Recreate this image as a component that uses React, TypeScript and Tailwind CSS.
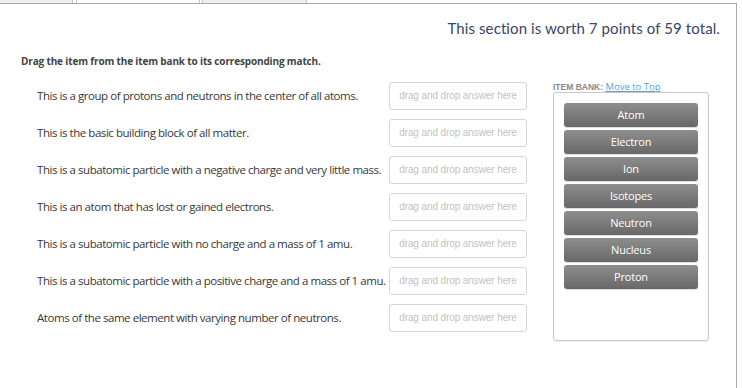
import React from "react";

const rows = [
  "This is a group of protons and neutrons in the center of all atoms.",
  "This is the basic building block of all matter.",
  "This is a subatomic particle with a negative charge and very little mass.",
  "This is an atom that has lost or gained electrons.",
  "This is a subatomic particle with no charge and a mass of 1 amu.",
  "This is a subatomic particle with a positive charge and a mass of 1 amu.",
  "Atoms of the same element with varying number of neutrons.",
];

const bank = ["Atom", "Electron", "Ion", "Isotopes", "Neutron", "Nucleus", "Proton"];

export default function App() {
  return (
    <div className="w-[742px] h-[388px] bg-white overflow-hidden">
      {/* tabs */}
      <div className="flex h-[3px] w-[737px]">
        <div className="w-[73px] bg-[#efefef] border-r border-[#c4c4c4]" />
        <div className="w-[3px]" />
        <div className="w-[124px] bg-white border-l border-r border-[#c4c4c4]" />
        <div className="w-[2px]" />
        <div className="w-[105px] bg-[#efefef] border-l border-r border-[#c4c4c4]" />
      </div>
      <div className="w-[737px] h-[385px] border-t border-r border-[#a9a9a9] font-['Lato',sans-serif]">
        <div className="flex justify-end pr-[16px] pt-[13px]">
          <span className="text-[15px] text-[#3b4466] tracking-[0.1px] font-['Lato',sans-serif]">
            This section is worth 7 points of 59 total.
          </span>
        </div>
        <div className="pl-[21px] pt-[14px] text-[10px] font-bold text-[#444] font-['Open_Sans',sans-serif] tracking-[-0.15px]">
          Drag the item from the item bank to its corresponding match.
        </div>
        <div className="flex pt-[4px]">
          <div className="w-[532px] flex flex-col gap-[9px] pt-[9px]">
            {rows.map((r) => (
              <div key={r} className="flex items-center h-[28px]">
                <div className="w-[389px] pl-[37px] text-[11.5px] text-[#383838] font-['Open_Sans',sans-serif] tracking-[-0.45px] whitespace-nowrap">
                  {r}
                </div>
                <div className="w-[138px] h-[28px] border border-[#d6d6d6] rounded-[3px] flex items-center justify-center text-[10px] text-[#c2c2c2] font-['Liberation_Sans',sans-serif] tracking-[-0.1px]">
                  drag and drop answer here
                </div>
              </div>
            ))}
          </div>
          <div className="ml-[21px] flex flex-col">
            <div className="text-[8.5px] leading-[12px] font-['Liberation_Sans',sans-serif] pt-[8px]">
              <span className="font-bold text-[#8a8a8a]">ITEM BANK: </span>
              <span className="text-[#5a9fd4] underline text-[9.5px] font-['Open_Sans',sans-serif]">Move to Top</span>
            </div>
            <div className="mt-[-1px] w-[156px] h-[249px] border border-[#c8c8c8] rounded-[3px] shadow-[0_1px_1px_rgba(0,0,0,0.06)] flex flex-col items-center pt-[10px] gap-[3px]">
              {bank.map((b) => (
                <div
                  key={b}
                  className="w-[134px] h-[24px] shrink-0 rounded-[3px] bg-gradient-to-b from-[#8e8e8e] to-[#686868] text-white text-[11px] leading-[14px] pt-[1px] flex items-center justify-center font-['Open_Sans',sans-serif] tracking-[-0.2px] shadow-[0_1px_1px_rgba(0,0,0,0.15)]"
                >
                  {b}
                </div>
              ))}
            </div>
          </div>
        </div>
      </div>
    </div>
  );
}
